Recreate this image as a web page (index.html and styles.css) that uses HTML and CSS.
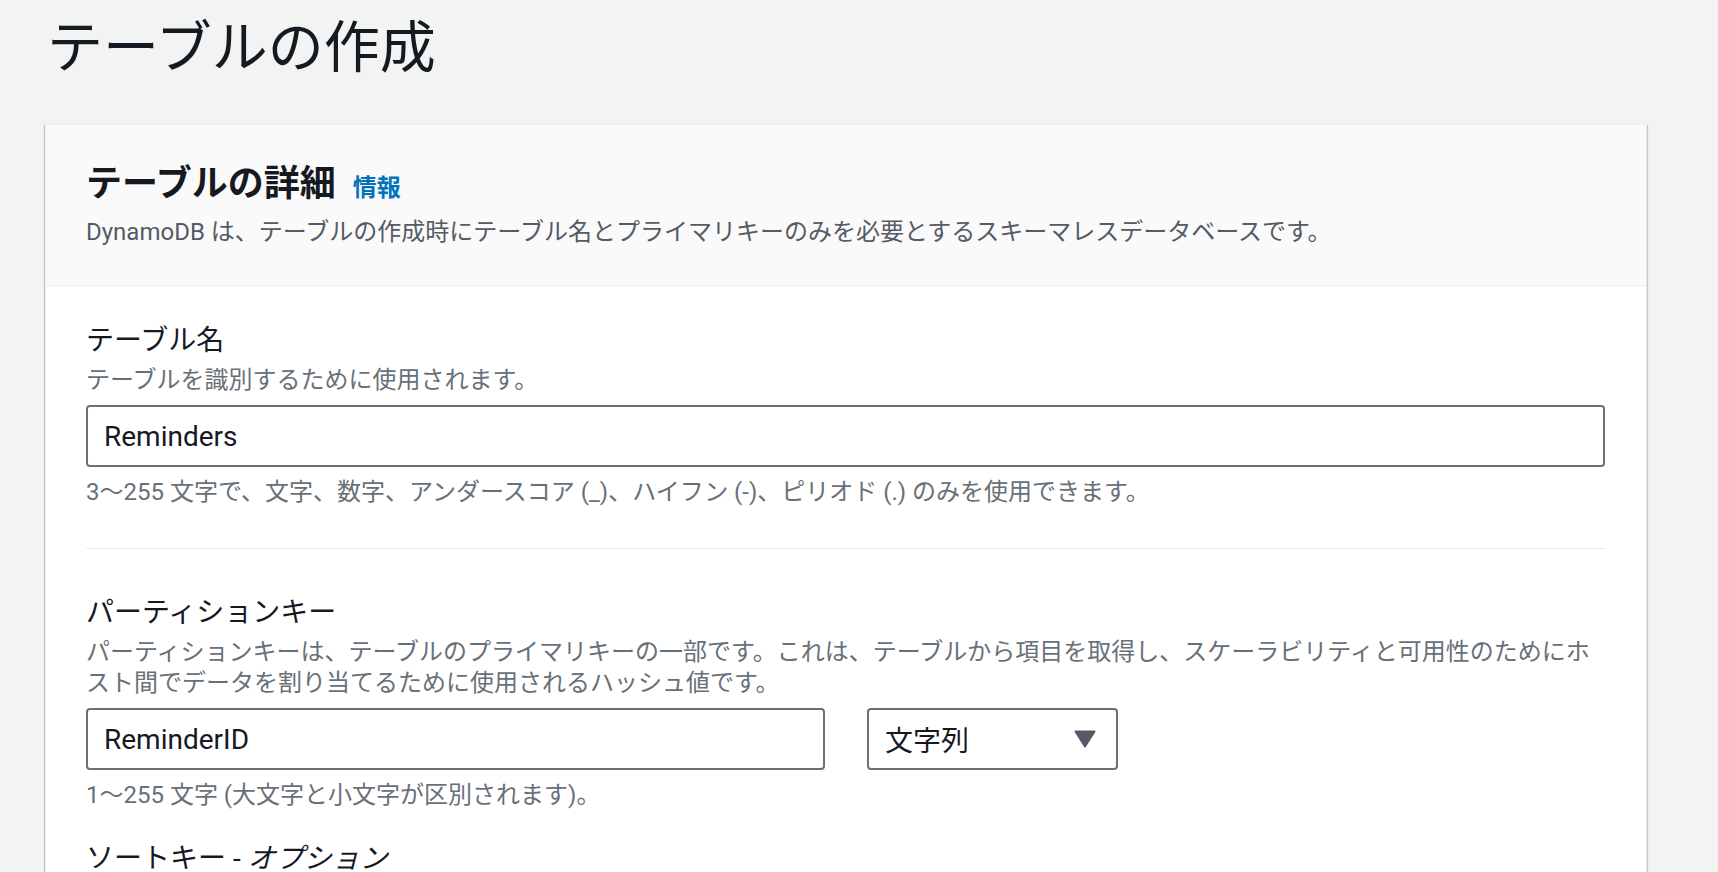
FILE: index.html
```html
<!DOCTYPE html>
<html lang="ja">
<head>
    <meta charset="UTF-8">
    <meta name="viewport" content="width=device-width, initial-scale=1.0">
    <title>テーブルの作成</title>
    <link rel="stylesheet" href="styles.css">
</head>
<body>
    <div class="page">
        <h1 class="page-title">テーブルの作成</h1>

        <div class="card">
            <div class="card-header">
                <h2>テーブルの詳細<a class="info" href="#">情報</a></h2>
                <p class="card-desc">DynamoDB は、テーブルの作成時にテーブル名とプライマリキーのみを必要とするスキーマレスデータベースです。</p>
            </div>

            <div class="card-body">
                <div class="field">
                    <label class="field-label" for="table-name">テーブル名</label>
                    <p class="field-desc">テーブルを識別するために使用されます。</p>
                    <input class="text-input" id="table-name" type="text" value="Reminders">
                    <p class="field-hint">3〜255 文字で、文字、数字、アンダースコア (_)、ハイフン (-)、ピリオド (.) のみを使用できます。</p>
                </div>

                <hr class="divider">

                <div class="field">
                    <label class="field-label" for="pk-name">パーティションキー</label>
                    <p class="field-desc">パーティションキーは、テーブルのプライマリキーの一部です。これは、テーブルから項目を取得し、スケーラビリティと可用性のためにホスト間でデータを割り当てるために使用されるハッシュ値です。</p>
                    <div class="key-row">
                        <input class="text-input key-name" id="pk-name" type="text" value="ReminderID">
                        <div class="select">
                            <span>文字列</span>
                            <svg width="22" height="18" viewBox="0 0 22 18"><path d="M1.5 1.5h19L11 16.5z" fill="#545b64" stroke="#545b64" stroke-width="2" stroke-linejoin="round"/></svg>
                        </div>
                    </div>
                    <p class="field-hint">1〜255 文字 (大文字と小文字が区別されます)。</p>
                </div>

                <div class="field field-next">
                    <label class="field-label" for="sk-name">ソートキー - <i>オプション</i></label>
                    <p class="field-desc">ソートキーは、テーブルのプライマリキーの 2 番目の部分として使用できます。ソートキーを使用すると、同じパーティションキーを共有するすべての項目をソートまたは検索できます。</p>
                    <div class="key-row">
                        <input class="text-input key-name" id="sk-name" type="text" placeholder="ソートキーの名前を入力">
                        <div class="select">
                            <span>文字列</span>
                            <svg width="22" height="18" viewBox="0 0 22 18"><path d="M1.5 1.5h19L11 16.5z" fill="#545b64" stroke="#545b64" stroke-width="2" stroke-linejoin="round"/></svg>
                        </div>
                    </div>
                    <p class="field-hint">1〜255 文字 (大文字と小文字が区別されます)。</p>
                </div>
            </div>
        </div>
    </div>
</body>
</html>
```

FILE: styles.css
```css
*{
    margin: 0;
    padding: 0;
    box-sizing: border-box;
}
body{
    background-color: #f2f3f3;
    color: #16191f;
    font-family: Roboto, "Noto Sans CJK JP", sans-serif;
}
.page{
    padding: 16px 71px 40px 45px;
}
.page-title{
    font-size: 56px;
    font-weight: 400;
    line-height: 64px;
    padding-left: 2px;
    margin-bottom: 44px;
}
.card{
    background-color: #fff;
    border: 1px solid #eaeded;
    box-shadow: 0 1px 1px 0 rgba(0,28,36,.3), 1px 1px 1px 0 rgba(0,28,36,.15), -1px 1px 1px 0 rgba(0,28,36,.15);
}
.card-header{
    background-color: #fafafa;
    border-bottom: 1px solid #eaeded;
    padding: 37px 40px 38px;
}
.card-header h2{
    font-size: 36px;
    font-weight: 700;
    line-height: 44px;
}
.info{
    font-size: 24px;
    font-weight: 700;
    color: #0073bb;
    text-decoration: none;
    margin-left: 17px;
}
.card-desc{
    font-size: 24px;
    line-height: 30px;
    color: #545b64;
    margin-top: 7px;
}
.card-body{
    padding: 38px 41px 40px 40px;
}
.field-label{
    display: block;
    font-size: 28px;
    line-height: 34px;
    margin-bottom: 7px;
}
.field-label i{
    font-style: italic;
}
.field-desc{
    font-size: 24px;
    line-height: 31px;
    color: #687078;
    margin-bottom: 9px;
}
.field-hint{
    font-size: 24px;
    line-height: 30px;
    color: #687078;
    margin-top: 10px;
}
.text-input{
    display: block;
    width: 100%;
    height: 62px;
    border: 2px solid #687078;
    border-radius: 4px;
    padding: 0 16px;
    font-family: Roboto, "Noto Sans CJK JP", sans-serif;
    font-size: 28px;
    color: #16191f;
    background-color: #fff;
    outline: none;
}
.text-input::placeholder{
    color: #879596;
    font-style: italic;
}
.divider{
    border: none;
    border-top: 1px solid #eaeded;
    margin: 41px 0 47px;
}
.key-row{
    display: flex;
    gap: 42px;
}
.key-name{
    width: 739px;
}
.select{
    width: 251px;
    height: 62px;
    border: 2px solid #687078;
    border-radius: 4px;
    display: flex;
    align-items: center;
    justify-content: space-between;
    padding: 0 20px 0 16px;
    font-size: 28px;
}
.field-next{
    margin-top: 32px;
}
```
